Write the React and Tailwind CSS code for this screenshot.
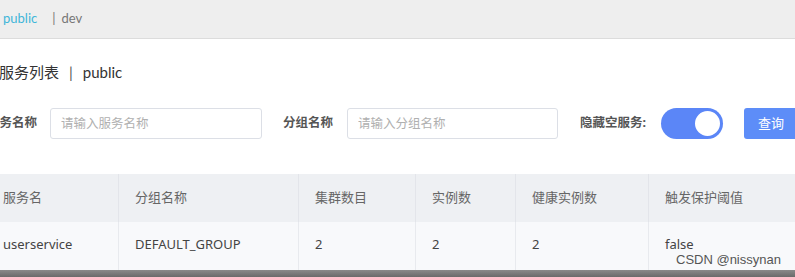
const columns = [
  { title: "服务名", width: "w-[132px]" },
  { title: "分组名称", width: "w-[180px]" },
  { title: "集群数目", width: "w-[117px]" },
  { title: "实例数", width: "w-[100px]" },
  { title: "健康实例数", width: "w-[133px]" },
  { title: "触发保护阈值", width: "flex-1" },
];

const rows = [["userservice", "DEFAULT_GROUP", "2", "2", "2", "false"]];

export default function App() {
  return (
    <div
      className="relative h-[277px] w-[795px] overflow-hidden bg-white"
      style={{ fontFamily: '"Noto Sans", "Noto Sans CJK SC", sans-serif' }}
    >
      {/* namespace bar */}
      <div
        className="flex h-[39px] items-center border-b border-[#dcdcdc] bg-[#eeeeee] pl-[3px] text-[13px]"
        style={{ fontFamily: 'Lato, "Noto Sans CJK SC", sans-serif' }}
      >
        <span className="text-[#3fb6d9]">public</span>
        <span className="ml-[15px] text-[#777]">|</span>
        <span className="ml-[6px] text-[#777]">dev</span>
      </div>

      <div className="ml-[-13px] w-[830px]">
        <h1
          className="ml-[12px] mt-[21px] flex items-center text-[15px] leading-[24px] text-[#333]"
          style={{ fontFamily: 'Lato, "Noto Sans CJK SC", sans-serif' }}
        >
          <span>服务列表</span>
          <span className="mx-[10px] text-[#555]">|</span>
          <span>public</span>
        </h1>

        <div className="mt-[24px] flex h-[31px] items-center text-[12.5px]">
          <label className="w-[50px] whitespace-nowrap font-bold text-[#555]">服务名称</label>
          <input
            className="ml-[13px] h-[31px] w-[212px] rounded-[3px] border border-[#dcdfe6] px-[10px] text-[12.5px] outline-none placeholder:text-[#b0b0b0]"
            placeholder="请输入服务名称"
          />
          <label className="ml-[21px] w-[50px] whitespace-nowrap font-bold text-[#555]">分组名称</label>
          <input
            className="ml-[14px] h-[31px] w-[211px] rounded-[3px] border border-[#dcdfe6] px-[10px] text-[12.5px] outline-none placeholder:text-[#b0b0b0]"
            placeholder="请输入分组名称"
          />
          <label className="ml-[22px] w-[66px] whitespace-nowrap font-bold text-[#555]">隐藏空服务:</label>
          <div className="ml-[15px] flex h-[31px] w-[62px] items-center justify-end rounded-full bg-[#5b86f7] pr-[1px]">
            <div className="h-[29px] w-[29px] rounded-full border-2 border-[#5b86f7] bg-white" />
          </div>
          <button className="ml-[21px] h-[31px] w-[54px] rounded-[3px] bg-[#5d8df8] text-[13px] text-white">
            查询
          </button>
        </div>

        <div className="mt-[35px] text-[13px]">
          <div className="flex h-[48px] bg-[#eef0f3]">
            {columns.map((c, i) => (
              <div
                key={i}
                className={`${c.width} flex items-center border-r border-[#e3e5ea] pl-[16px] text-[#666]`}
              >
                {c.title}
              </div>
            ))}
          </div>
          {rows.map((r, ri) => (
            <div key={ri} className="flex h-[48px] bg-[#f8f9fb]">
              {r.map((cell, ci) => (
                <div
                  key={ci}
                  className={`${columns[ci].width} flex items-center border-r border-[#e8eaee] pb-[2px] pl-[16px] text-[#444]`}
                >
                  {cell}
                </div>
              ))}
            </div>
          ))}
        </div>
      </div>

      <div className="h-[7px] bg-gradient-to-b from-[#8a8a8a] to-[#6a6a6a]" />

      <span
        className="absolute left-[676px] top-[252px] text-[13px] leading-[16px] text-[#555]"
        style={{ fontFamily: '"Liberation Sans", Arial, sans-serif' }}
      >
        CSDN @nissynan
      </span>
    </div>
  );
}
